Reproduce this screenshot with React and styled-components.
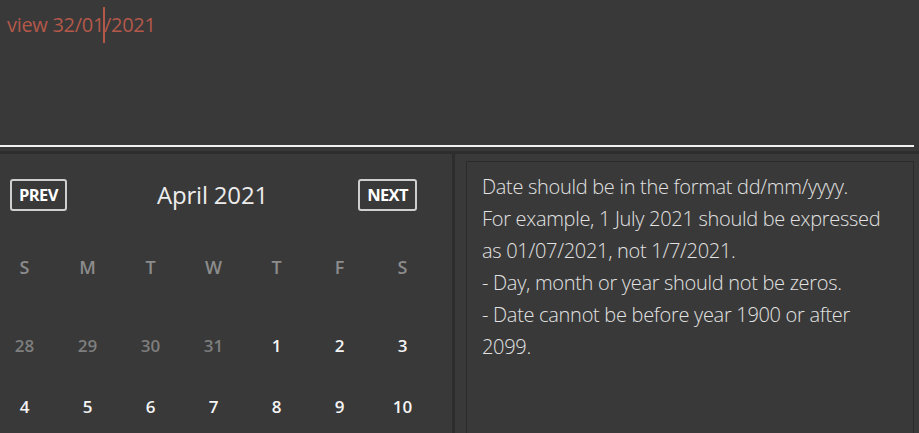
import { createGlobalStyle } from 'styled-components';
import styled from 'styled-components';

const GlobalStyle = createGlobalStyle`
  html, body {
    margin: 0;
    padding: 0;
    background: #393939;
    overflow: hidden;
  }
  body {
    font-family: 'Open Sans', 'Noto Sans', sans-serif;
  }
`;

const Page = styled.div`
  width: 919px;
  height: 433px;
  display: flex;
  flex-direction: column;
  background: #393939;
  overflow: hidden;
`;

const CommandBox = styled.div`
  height: 147px;
  padding: 7px 7px 0;
  box-sizing: border-box;
  border-bottom: 2px solid #f2f2f2;
  margin-right: 5px;
  font-size: 20px;
  color: #b4584a;
  letter-spacing: -0.3px;
`;

const Caret = styled.span`
  display: inline-block;
  width: 2px;
  height: 36px;
  margin: 0 -1px -11px;
  background: #b4584a;
`;

const Body = styled.div`
  flex: 1;
  display: flex;
  margin-top: 4px;
  border-top: 3px solid #2d2d2d;
  min-height: 0;
`;

const CalendarPane = styled.section`
  width: 455px;
  border-right: 3px solid #2d2d2d;
  padding-top: 24px;
  box-sizing: border-box;
  overflow: hidden;
`;

const Header = styled.div`
  display: flex;
  align-items: center;
  justify-content: space-between;
  padding: 0 35px 0 10px;
`;

const NavButton = styled.button`
  font-family: 'Open Sans', sans-serif;
  font-weight: 700;
  font-size: 16.5px;
  color: #ffffff;
  background: transparent;
  border: 2px solid #cfcfcf;
  border-radius: 3px;
  padding: 0 7px;
  height: 32px;
  letter-spacing: -0.6px;
`;

const MonthTitle = styled.div`
  font-size: 24px;
  color: #ececec;
  font-weight: 500;
  letter-spacing: -0.2px;
`;

const Grid = styled.div`
  display: grid;
  grid-template-columns: repeat(7, 63px);
  margin-left: -7px;
  margin-top: 44px;
`;

const DayName = styled.div`
  text-align: center;
  font-size: 18px;
  font-weight: 600;
  color: #8c8c8c;
  height: 79px;
`;

const DateCell = styled.div`
  text-align: center;
  font-size: 17px;
  font-weight: 600;
  color: ${(p) => (p.$muted ? '#7e7e7e' : '#f4f4f4')};
  height: 61px;
`;

const InfoPane = styled.section`
  flex: 1;
  padding: 7px 5px 0 11px;
  box-sizing: border-box;
`;

const InfoBox = styled.div`
  height: 100%;
  border: 1px solid #2b2b2b;
  border-bottom: none;
  padding: 9px 30px 0 15px;
  box-sizing: border-box;
  font-size: 20px;
  line-height: 32px;
  font-weight: 300;
  color: #e2e2e2;
  letter-spacing: -0.3px;
`;

const days = ['S', 'M', 'T', 'W', 'T', 'F', 'S'];
const dates = [
  [28, true], [29, true], [30, true], [31, true], [1], [2], [3],
  [4], [5], [6], [7], [8], [9], [10],
];

export default function App() {
  return (
    <Page>
      <GlobalStyle />
      <CommandBox>
        view 32/01<Caret />/2021
      </CommandBox>
      <Body>
        <CalendarPane>
          <Header>
            <NavButton>PREV</NavButton>
            <MonthTitle>April 2021</MonthTitle>
            <NavButton>NEXT</NavButton>
          </Header>
          <Grid>
            {days.map((d, i) => (
              <DayName key={i}>{d}</DayName>
            ))}
            {dates.map(([n, muted], i) => (
              <DateCell key={i} $muted={muted}>
                {n}
              </DateCell>
            ))}
          </Grid>
        </CalendarPane>
        <InfoPane>
          <InfoBox>
            Date should be in the format dd/mm/yyyy.
            <br />
            For example, 1 July 2021 should be expressed as 01/07/2021, not 1/7/2021.
            <br />
            - Day, month or year should not be zeros.
            <br />
            - Date cannot be before year 1900 or after 2099.
          </InfoBox>
        </InfoPane>
      </Body>
    </Page>
  );
}
